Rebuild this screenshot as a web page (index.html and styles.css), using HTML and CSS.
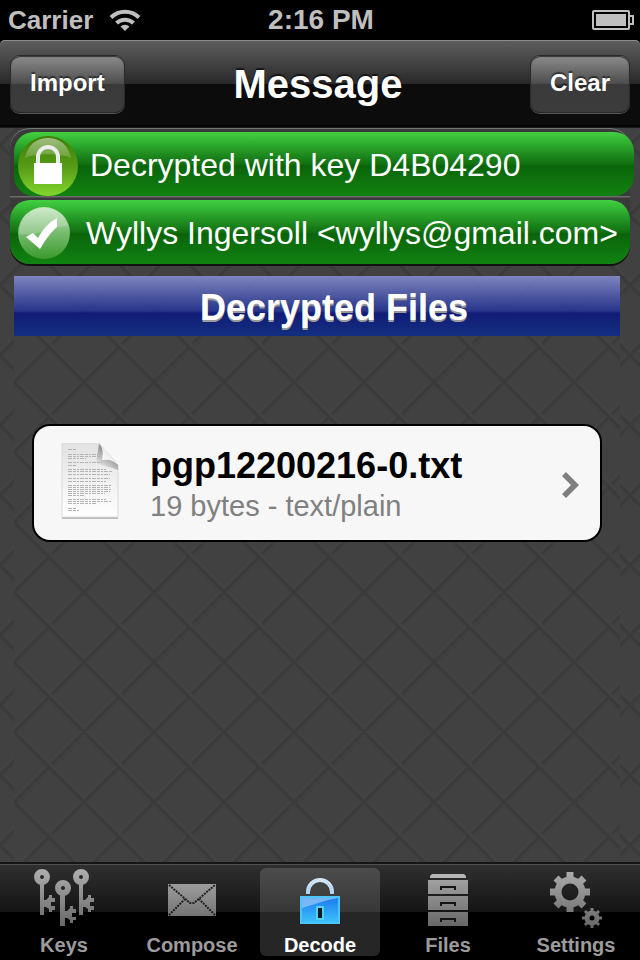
FILE: index.html
```html
<!DOCTYPE html>
<html lang="en">
<head>
    <meta charset="UTF-8">
    <meta name="viewport" content="width=device-width, initial-scale=1.0">
    <title>Message</title>
    <link rel="stylesheet" href="styles.css">
</head>
<body>

    <!-- Status Bar -->
    <div class="status-bar">
        <div class="carrier">
            <span>Carrier</span>
            <svg class="wifi" width="32" height="24" viewBox="0 0 32 24" fill="none" stroke="#bfbfbf" stroke-width="4">
                <path d="M2 9.500a20 20 0 0 1 28 0"/>
                <path d="M7.500 15a12.500 12.500 0 0 1 17 0"/>
                <path d="M11.500 18.500a6.500 6.500 0 0 1 9 0L16 23z" fill="#bfbfbf" stroke="none"/>
            </svg>
        </div>
        <span class="time">2:16 PM</span>
        <svg class="battery" width="42" height="20" viewBox="0 0 42 20">
            <rect x="1" y="1" width="36" height="18" rx="1" fill="none" stroke="#bfbfbf" stroke-width="2"/>
            <rect x="4" y="4" width="30" height="12" fill="#bfbfbf"/>
            <path d="M38 6h3v8h-3" fill="none" stroke="#bfbfbf" stroke-width="2"/>
        </svg>
    </div>

    <!-- Title Bar -->
    <header class="nav-bar">
        <button type="button" class="nav-btn">Import</button>
        <h1>Message</h1>
        <button type="button" class="nav-btn nav-btn-right">Clear</button>
    </header>

    <main>
        <!-- Signature / key info -->
        <div class="info-group">
            <div class="info-row key-row">
                <svg width="60" height="60" viewBox="0 0 60 60">
                    <defs>
                        <linearGradient id="lime" x1="0" y1="0" x2="0" y2="1">
                            <stop offset="0" stop-color="#3f7f05"/>
                            <stop offset="0.5" stop-color="#569a16"/>
                            <stop offset="1" stop-color="#83d62c"/>
                        </linearGradient>
                        <linearGradient id="gloss" x1="0" y1="0" x2="0" y2="1">
                            <stop offset="0" stop-color="#fff" stop-opacity="0.5"/>
                            <stop offset="1" stop-color="#fff" stop-opacity="0.15"/>
                        </linearGradient>
                    </defs>
                    <circle cx="30" cy="30" r="30" fill="url(#lime)"/>
                    <path d="M7 22C10 8 19 2 30 2s20 6 23 20c-12-5-34-5-46 0z" fill="url(#gloss)"/>
                    <path d="M20 28v-7a10 10 0 0 1 20 0v7" fill="none" stroke="#ececec" stroke-width="4"/>
                    <rect x="16" y="27" width="28" height="21" fill="#fff"/>
                </svg>
                <span>Decrypted with key D4B04290</span>
            </div>
            <div class="info-row signer-row">
                <svg width="52" height="52" viewBox="0 0 52 52">
                    <defs>
                        <linearGradient id="mint" x1="0" y1="0" x2="0" y2="1">
                            <stop offset="0" stop-color="#c3e6bf"/>
                            <stop offset="0.5" stop-color="#78bb70"/>
                            <stop offset="1" stop-color="#3b9a2c"/>
                        </linearGradient>
                    </defs>
                    <circle cx="26" cy="26" r="26" fill="url(#mint)"/>
                    <path d="M1 27C1 10 13 1 26 1s22 8 24 18C34 19 19 30 1 27z" fill="#fff" opacity="0.2"/>
                    <path d="M8 30l7-4 5 5c5-9 11-16 19-20v9c-6 5-11 12-17 22z" fill="#fff"/>
                </svg>
                <span>Wyllys Ingersoll &lt;wyllys@gmail.com&gt;</span>
            </div>
        </div>

        <!-- File list -->
        <section class="files">
            <h2>Decrypted Files</h2>
            <a href="#" class="file-card">
                <svg width="58" height="76" viewBox="0 0 58 76">
                    <defs>
                        <linearGradient id="paper" x1="0" y1="0" x2="0" y2="1">
                            <stop offset="0" stop-color="#e2e2e2"/>
                            <stop offset="1" stop-color="#fff"/>
                        </linearGradient>
                        <linearGradient id="fold" x1="0" y1="1" x2="1" y2="0">
                            <stop offset="0" stop-color="#fff"/>
                            <stop offset="0.5" stop-color="#eee"/>
                            <stop offset="1" stop-color="#bbb"/>
                        </linearGradient>
                        <linearGradient id="foldShade" x1="0.7" y1="0.3" x2="0.2" y2="1">
                            <stop offset="0" stop-color="#777"/>
                            <stop offset="1" stop-color="#aaa" stop-opacity="0"/>
                        </linearGradient>
                    </defs>
                    <path d="M1 2h37l19 21v53H1z" fill="#bbb"/>
                    <path d="M1 0h37l19 22v52H1z" fill="url(#paper)" stroke="#dadada"/>
                    <path d="M38 1l19 21v5L35 20z" fill="url(#foldShade)"/>
                    <path d="M40 2c2 5 2 10 1 15 6-1 11 0 16 5z" fill="url(#fold)"/>
                    <g stroke="#b4b4b4" stroke-width="1" stroke-dasharray="4 1 3 1 2 1">
                        <path d="M7 6.500h8M7 11.500h33M7 13.500h32M7 15.500h18M7 19.500h34M7 22.500h8"/>
                        <path d="M7 26.500h38M7 28.500h44M7 31.500h42M7 35.500h42M7 38.500h38"/>
                        <path d="M7 42.500h43M7 44.500h42M7 46.500h43M7 48.500h42M7 50.500h37M7 52.500h16"/>
                        <path d="M7 56.500h38M7 58.500h43M7 60.500h28M7 65.500h8M7 67.500h11"/>
                    </g>
                </svg>
                <span class="file-text">
                    <span class="file-name">pgp12200216-0.txt</span>
                    <span class="file-meta">19 bytes - text/plain</span>
                </span>
                <svg class="chevron" width="17" height="26" viewBox="0 0 17 26">
                    <path d="M0 4l4-4 13 13L4 26l-4-4 9-9z" fill="#7f7f7f"/>
                </svg>
            </a>
        </section>
    </main>

    <!-- Tab Bar -->
    <nav class="tab-bar">
        <a href="#" class="tab">
            <svg width="64" height="60" viewBox="0 0 64 60">
                <defs>
                    <linearGradient id="metal" gradientUnits="userSpaceOnUse" x1="0" y1="0" x2="0" y2="60">
                        <stop offset="0" stop-color="#b0b0b0"/>
                        <stop offset="1" stop-color="#656565"/>
                    </linearGradient>
                </defs>
                <g fill="none" stroke="url(#metal)">
                    <circle cx="10" cy="9" r="5" stroke-width="6"/>
                    <circle cx="31" cy="20" r="5" stroke-width="6"/>
                    <circle cx="49" cy="9" r="5" stroke-width="6"/>
                </g>
                <g fill="url(#metal)">
                    <path d="M8 16h4v16h2l3-3v-2h3v3h3v4h-4v4h4v4h-3v2h-3v-3l-3-2h-2v8H8z"/>
                    <path d="M28 27h5v16h2l3-3v-2h3v3h3v4h-4v4h4v3h-3v3h-3v-3l-3-2h-2v8h-5z"/>
                    <path d="M47 16h4v16h2l3-3v-2h3v3h3v4h-4v4h4v4h-3v2h-3v-3l-3-2h-2v8h-4z"/>
                </g>
            </svg>
            <span>Keys</span>
        </a>
        <a href="#" class="tab">
            <svg width="64" height="60" viewBox="0 0 64 60">
                <rect x="8" y="16" width="48" height="32" fill="url(#metal)"/>
                <path d="M9 17l21 18h4l21-18M9 47l16-16M55 47L39 31" fill="none" stroke="#222" stroke-width="2" stroke-dasharray="2 1"/>
            </svg>
            <span>Compose</span>
        </a>
        <a href="#" class="tab active">
            <svg width="64" height="60" viewBox="0 0 64 60">
                <defs>
                    <linearGradient id="lockBody" x1="0" y1="0" x2="0" y2="1">
                        <stop offset="0" stop-color="#1c78ee"/>
                        <stop offset="1" stop-color="#3cc4fa"/>
                    </linearGradient>
                    <linearGradient id="shackle" x1="0" y1="0" x2="0" y2="1">
                        <stop offset="0" stop-color="#d5e6f6"/>
                        <stop offset="1" stop-color="#a9d3f5"/>
                    </linearGradient>
                </defs>
                <path d="M20 26v-2a12 12 0 0 1 24 0v2" fill="none" stroke="url(#shackle)" stroke-width="4"/>
                <rect x="13" y="29" width="38" height="26" fill="url(#lockBody)" stroke="#4cc6f8" stroke-width="2"/>
                <path d="M14 30h36l-10 2-26 8z" fill="#8fc3f5" opacity="0.8"/>
                <rect x="29" y="39" width="6" height="12" fill="#0c1a20" stroke="#52d0f5" stroke-width="2"/>
            </svg>
            <span>Decode</span>
        </a>
        <a href="#" class="tab">
            <svg width="64" height="60" viewBox="0 0 64 60">
                <path d="M14 10v-2l2-2h32l2 2v2z" fill="#b5b5b5"/>
                <path d="M12 12h40v14H12zM12 28h40v14H12zM12 44h40v14H12z" fill="url(#metal)"/>
                <path d="M25 22v-3h14v3M25 38v-3h14v3M25 54v-3h14v3" fill="none" stroke="#151515" stroke-width="2"/>
            </svg>
            <span>Files</span>
        </a>
        <a href="#" class="tab">
            <svg width="64" height="60" viewBox="0 0 64 60">
                <g fill="none" stroke="url(#metal)">
                    <circle cx="26" cy="24" r="12" stroke-width="7"/>
                    <path d="M26 4v7M26 37v7M6 24h7M39 24h7M12 10l5 5M35 33l5 5M40 10l-5 5M17 33l-5 5" stroke-width="7"/>
                    <circle cx="48" cy="50" r="5" stroke-width="5"/>
                    <path d="M48 40v4M48 56v4M38 50h4M54 50h4M41 43l3 3M52 54l3 3M55 43l-3 3M44 54l-3 3" stroke-width="3"/>
                </g>
            </svg>
            <span>Settings</span>
        </a>
    </nav>

</body>
</html>
```

FILE: styles.css
```css
/* General Styles */
* {
    box-sizing: border-box;
}

body {
    font-family: "Liberation Sans", Arial, Helvetica, sans-serif;
    display: flex;
    flex-direction: column;
    min-height: 100vh;
    margin: 0;
    background-color: #000;
    color: #fff;
}

a {
    color: inherit;
    text-decoration: none;
}

h1, h2 {
    margin: 0;
}

svg {
    display: block;
    flex-shrink: 0;
}

/* Status Bar */
.status-bar {
    display: grid;
    grid-template-columns: 1fr auto 1fr;
    align-items: center;
    height: 40px;
    padding: 0 6px 0 8px;
    color: #bfbfbf;
    font-weight: bold;
}

.carrier {
    display: flex;
    align-items: center;
    gap: 16px;
    font-size: 26px;
}

.time {
    font-size: 28px;
}

.battery {
    justify-self: end;
}

/* Title Bar */
.nav-bar {
    display: grid;
    grid-template-columns: 1fr auto 1fr;
    align-items: center;
    height: 88px;
    padding: 0 10px;
    border-radius: 5px 5px 0 0;
    background: linear-gradient(#5e5e5e, #292929 44px, #0c0c0c 44px, #0c0c0c 84px, #000 86px, #222);
    box-shadow: inset 0 1px 0 #8c8c8c;
}

.nav-bar h1 {
    padding-right: 4px;
    font-size: 40px;
    text-shadow: 0 -2px 1px rgba(0, 0, 0, 0.6);
}

.nav-btn {
    justify-self: start;
    height: 58px;
    padding: 0 19px 2px;
    border: 1px solid #2a2a2a;
    border-radius: 10px;
    background: linear-gradient(#8c8c8c, #4c4c4c 28px, #3a3a3a 28px, #3c3c3c);
    box-shadow: 0 1px 0 #555, inset 0 1px 1px #333;
    color: #fff;
    font-family: inherit;
    font-size: 24px;
    font-weight: bold;
    text-shadow: 0 -2px 1px rgba(0, 0, 0, 0.5);
    cursor: pointer;
}

.nav-btn-right {
    justify-self: end;
}

/* Quilted background, 70px diamonds */
main, .files {
    background-color: #414141;
    background-image:
        linear-gradient(45deg, transparent calc(50% - 3px), #393939 50%, #444 calc(50% + 3px), transparent calc(50% + 5px)),
        linear-gradient(-45deg, transparent calc(50% - 3px), #3a3a3a 50%, #444 calc(50% + 3px), transparent calc(50% + 5px));
    background-size: 70px 70px;
}

main {
    flex: 1;
    display: flex;
    flex-direction: column;
    background-position: 0 17px;
}

/* Info Rows */
.info-group {
    display: flex;
    flex-direction: column;
    gap: 4px;
    margin: 0 10px;
    padding-top: 4px;
    border-radius: 20px;
    background: linear-gradient(#3a3a3a 68px, #6a6a6a 68px, #6a6a6a 69px, #3a3a3a 70px);
    box-shadow: inset 0 1px 0 #777, 0 2px 0 #111;
}

.info-row {
    display: flex;
    align-items: center;
    height: 64px;
    border-radius: 20px;
    background: linear-gradient(#42d042, #34b934 8px, #1c861c 24px, #127012 32px, #0a640a 34px, #118311);
    font-size: 32px;
    white-space: nowrap;
}

.key-row {
    gap: 12px;
    margin: 0 -4px 0 4px;
    padding: 4px 4px 0;
}

.key-row span {
    padding-bottom: 2px;
}

.signer-row {
    gap: 16px;
    padding: 2px 8px 0;
}

/* File List */
.files {
    flex: 1;
    margin: 12px 20px 0 14px;
    background-position: 0 36px;
}

.files h2 {
    padding: 4px 0 0 34px;
    background: linear-gradient(rgba(138, 144, 212, 0.85), rgba(36, 52, 146, 0.9) 35px, rgba(14, 26, 122, 0.95) 37px, rgba(17, 46, 130, 0.95));
    font-size: 36px;
    line-height: 56px;
    text-align: center;
    text-shadow: 0 2px 0 #999;
}

.file-card {
    display: flex;
    align-items: flex-start;
    gap: 31px;
    margin: 88px 18px 0;
    padding: 17px 21px 14px 27px;
    border: 2px solid #000;
    border-radius: 18px;
    background-color: #f7f7f7;
}

.file-text {
    display: flex;
    flex-direction: column;
    flex: 1;
    padding-top: 3px;
    line-height: 40px;
}

.file-name {
    color: #000;
    font-size: 36px;
    font-weight: bold;
}

.file-meta {
    color: #808080;
    font-size: 29px;
}

.chevron {
    align-self: center;
}

/* Tab Bar */
.tab-bar {
    display: flex;
    padding: 4px 0;
    border-top: 2px solid #151515;
    background: linear-gradient(#303030, #141414 48px, #000 48px);
    box-shadow: inset 0 1px 0 #505050;
}

.tab {
    display: flex;
    flex: 1;
    flex-direction: column;
    align-items: center;
    gap: 7px;
    margin: 0 4px;
    padding-bottom: 1px;
    border-radius: 6px;
    color: #9c9c9c;
    font-size: 20px;
    font-weight: bold;
    line-height: 20px;
}

.tab.active {
    background-color: rgba(255, 255, 255, 0.15);
    color: #fff;
}
```
